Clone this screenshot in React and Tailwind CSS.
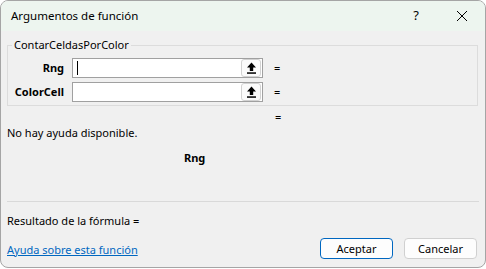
import React from 'react';

const UploadIcon = () => (
  <svg width="11" height="12" viewBox="0 0 11 12" fill="none">
    <path d="M5.5 0.5 L1 5.5 H3.8 V9 H7.2 V5.5 H10 Z" fill="#000" />
    <rect x="1" y="10.3" width="9" height="1.5" fill="#000" />
  </svg>
);

function ArgRow({ label, cursor }) {
  return (
    <div className="flex items-center h-[20px]">
      <div className="w-[56px] text-right font-bold leading-[16px]">{label}</div>
      <div className="ml-[8px] w-[191px] h-[20px] border border-[#a0a0a0] bg-white flex items-center">
        <div className="flex-1 pl-[4px] flex items-center">
          {cursor && <div className="w-px h-[14px] bg-black" />}
        </div>
        <div className="w-[20px] h-[18px] mr-px rounded-[3px] border border-[#d2d2d2] bg-[#fbfbfb] flex items-center justify-center">
          <UploadIcon />
        </div>
      </div>
      <div className="ml-[11px] leading-[16px]">=</div>
    </div>
  );
}

export default function App() {
  return (
    <div className="w-[486px] h-[269px] bg-white">
      <div className="w-[486px] h-[268px] rounded-[8px] border border-[#a5a5a5] bg-[#f0f0f0] overflow-hidden flex flex-col font-['Noto_Sans',sans-serif] text-[11px] text-black">
        {/* Title bar */}
        <div className="h-[30px] shrink-0 bg-[#edf5ef] flex items-center">
          <div className="pl-[10px] leading-[16px] text-[11.5px]">Argumentos de función</div>
          <div className="ml-auto w-[46px] h-full flex items-center justify-center text-[13px]">?</div>
          <div className="w-[46px] h-full flex items-center justify-center">
            <svg width="12" height="12" viewBox="0 0 12 12">
              <path d="M1 1 L11 11 M11 1 L1 11" stroke="#000" strokeWidth="1" />
            </svg>
          </div>
        </div>

        {/* Body */}
        <div className="flex-1 flex flex-col px-[6px]">
          <fieldset className="mt-[6px] w-[471px] border border-[#dcdcdc] px-0 pb-[3px]">
            <legend className="ml-[4px] px-[2px] leading-[16px]">ContarCeldasPorColor</legend>
            <div className="pt-[5px] flex flex-col gap-[4px]">
              <ArgRow label="Rng" cursor />
              <ArgRow label="ColorCell" />
            </div>
          </fieldset>

          <div className="mt-[3px] h-[16px] leading-[16px] pl-[268px]">=</div>
          <div className="h-[16px] leading-[16px]">No hay ayuda disponible.</div>
          <div className="mt-[9px] h-[16px] leading-[16px] pl-[177px] font-bold">Rng</div>

          <div className="mt-[35px] h-px w-[472px] bg-[#d9d9d9]" />

          <div className="mt-[11px] h-[16px] leading-[16px]">Resultado de la fórmula =</div>

          <div className="mt-[9px] flex items-center">
            <a href="#" className="leading-[16px] text-[#0067c0] underline mt-[2px]">Ayuda sobre esta función</a>
            <div className="ml-auto flex gap-[11px] mr-[2px]">
              <button className="w-[73px] h-[21px] rounded-[4px] border border-[#0067c0] bg-[#fdfdfd] leading-[16px]">Aceptar</button>
              <button className="w-[73px] h-[21px] rounded-[4px] border border-[#d0d0d0] bg-[#fdfdfd] leading-[16px]">Cancelar</button>
            </div>
          </div>
        </div>
      </div>
    </div>
  );
}
